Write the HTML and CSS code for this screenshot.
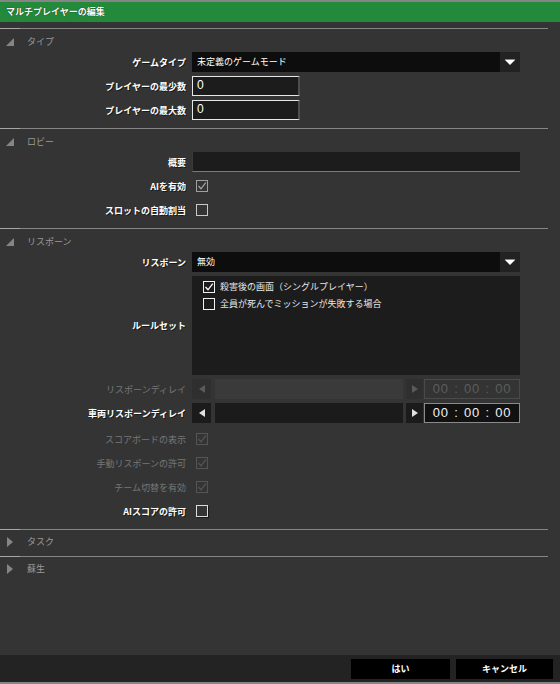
FILE: index.html
```html
<!DOCTYPE html>
<html lang="ja">
<head>
<meta charset="utf-8">
<title>マルチプレイヤーの編集</title>
<link rel="stylesheet" href="styles.css">
</head>
<body>
<div class="topline"></div>
<div class="titlebar">マルチプレイヤーの編集</div>
<div class="content">
  <section class="sec">
    <div class="sep"></div>
    <div class="sec-head"><svg class="tri" width="8" height="8" viewBox="0 0 8 8"><polygon points="8,0 8,8 0,8"/></svg><span>タイプ</span></div>
    <div class="rows">
      <div class="row"><span class="lbl">ゲームタイプ</span>
        <div class="select"><span class="sel-val">未定義のゲームモード</span><span class="sel-btn"><svg width="10" height="7" viewBox="0 0 10 7"><rect x="0" y="0" width="10" height="1" fill="#888"/><polygon points="0,1 10,1 5,6" fill="#fff"/></svg></span></div></div>
      <div class="row"><span class="lbl">プレイヤーの最少数</span><div class="num">0</div></div>
      <div class="row"><span class="lbl">プレイヤーの最大数</span><div class="num">0</div></div>
    </div>
  </section>
  <section class="sec">
    <div class="sep"></div>
    <div class="sec-head"><svg class="tri" width="8" height="8" viewBox="0 0 8 8"><polygon points="8,0 8,8 0,8"/></svg><span>ロビー</span></div>
    <div class="rows">
      <div class="row"><span class="lbl">概要</span><div class="text-in"></div></div>
      <div class="row"><span class="lbl">AIを有効</span><span class="cb cb-gray"><svg viewBox="0 0 12 12"><polyline points="2.5,6 5,8.8 9.8,2.6"/></svg></span></div>
      <div class="row"><span class="lbl">スロットの自動割当</span><span class="cb"></span></div>
    </div>
  </section>
  <section class="sec">
    <div class="sep"></div>
    <div class="sec-head"><svg class="tri" width="8" height="8" viewBox="0 0 8 8"><polygon points="8,0 8,8 0,8"/></svg><span>リスポーン</span></div>
    <div class="rows">
      <div class="row"><span class="lbl">リスポーン</span>
        <div class="select"><span class="sel-val">無効</span><span class="sel-btn"><svg width="10" height="7" viewBox="0 0 10 7"><rect x="0" y="0" width="10" height="1" fill="#888"/><polygon points="0,1 10,1 5,6" fill="#fff"/></svg></span></div></div>
      <div class="row row-list"><span class="lbl">ルールセット</span>
        <div class="listbox">
          <div class="li"><span class="cb cb-white"><svg viewBox="0 0 12 12"><polyline points="2.5,6 5,8.8 9.8,2.6"/></svg></span>殺害後の画面（シングルプレイヤー）</div>
          <div class="li"><span class="cb cb-white"></span>全員が死んでミッションが失敗する場合</div>
        </div>
      </div>
      <div class="row disabled"><span class="lbl">リスポーンディレイ</span>
        <div class="delay">
          <span class="arr"><svg width="6" height="8" viewBox="0 0 6 8"><polygon points="6,0 6,8 0,4"/></svg></span>
          <span class="track"></span>
          <span class="arr arr-r"><svg width="6" height="8" viewBox="0 0 6 8"><polygon points="0,0 0,8 6,4"/></svg></span>
          <span class="time">00 : 00 : 00</span>
        </div>
      </div>
      <div class="row"><span class="lbl">車両リスポーンディレイ</span>
        <div class="delay">
          <span class="arr"><svg width="6" height="8" viewBox="0 0 6 8"><polygon points="6,0 6,8 0,4"/></svg></span>
          <span class="track"></span>
          <span class="arr arr-r"><svg width="6" height="8" viewBox="0 0 6 8"><polygon points="0,0 0,8 6,4"/></svg></span>
          <span class="time">00 : 00 : 00</span>
        </div>
      </div>
      <div class="row disabled first-cb"><span class="lbl">スコアボードの表示</span><span class="cb cb-dis"><svg viewBox="0 0 12 12"><polyline points="2.5,6 5,8.8 9.8,2.6"/></svg></span></div>
      <div class="row disabled"><span class="lbl">手動リスポーンの許可</span><span class="cb cb-dis"><svg viewBox="0 0 12 12"><polyline points="2.5,6 5,8.8 9.8,2.6"/></svg></span></div>
      <div class="row disabled"><span class="lbl">チーム切替を有効</span><span class="cb cb-dis"><svg viewBox="0 0 12 12"><polyline points="2.5,6 5,8.8 9.8,2.6"/></svg></span></div>
      <div class="row"><span class="lbl">AIスコアの許可</span><span class="cb cb-bright"></span></div>
    </div>
  </section>
  <section class="sec collapsed">
    <div class="sep"></div>
    <div class="sec-head"><svg class="tri" width="6" height="10" viewBox="0 0 6 10"><polygon points="0,0 6,5 0,10"/></svg><span>タスク</span></div>
  </section>
  <section class="sec collapsed">
    <div class="sep"></div>
    <div class="sec-head"><svg class="tri" width="6" height="10" viewBox="0 0 6 10"><polygon points="0,0 6,5 0,10"/></svg><span>蘇生</span></div>
  </section>
</div>
<div class="footer">
  <button class="btn btn-yes">はい</button>
  <button class="btn btn-cancel">キャンセル</button>
</div>
<div class="bottomline"></div>
</body>
</html>
```

FILE: styles.css
```css
* { box-sizing: border-box; }
html, body { margin: 0; padding: 0; }
body {
  width: 560px;
  height: 684px;
  background: #343434;
  font-family: "Noto Sans CJK JP", "Noto Sans", sans-serif;
  font-size: 9px;
  color: #fff;
  display: flex;
  flex-direction: column;
  overflow: hidden;
}
.topline { height: 2px; background: #858585; flex: none; }
.titlebar {
  height: 20px;
  flex: none;
  background: #248a3b;
  color: #fff;
  font-weight: bold;
  line-height: 20px;
  padding-left: 6px;
  text-shadow: 0 0 1px #000;
}
.content {
  flex: 1;
  padding-top: 6px;
  display: flex;
  flex-direction: column;
}
.sep {
  width: 548px;
  height: 1px;
  background: linear-gradient(to right, #a8a8a8 20px, #858585 20px);
}
.sec-head {
  height: 23px;
  display: flex;
  align-items: center;
  padding-top: 2px;
  color: #9a9a9a;
}
.sec-head .tri { fill: #858585; margin-left: 6px; width: 8px; flex: none; }
.sec-head span { margin-left: 13px; }
.collapsed .sec-head { height: 26px; padding-top: 0; padding-bottom: 3px; }
.collapsed .sec-head .tri { margin-left: 7px; margin-right: 1px; width: 6px; height: 10px; }
.rows {
  display: flex;
  flex-direction: column;
  gap: 4px;
  padding-bottom: 8px;
}
.row {
  display: grid;
  grid-template-columns: 186px 328px;
  column-gap: 6px;
  align-items: center;
  height: 20px;
}
.lbl {
  text-align: right;
  font-weight: bold;
  color: #fff;
  white-space: nowrap;
  text-shadow: 1px 1px 0 #1a1a1a;
}
.disabled .lbl { color: #777; font-weight: normal; text-shadow: none; }
.select {
  display: flex;
  height: 20px;
  background: #0d0d0d;
}
.sel-val { flex: 1; line-height: 20px; padding-left: 5px; color: #fff; }
.sel-btn {
  width: 20px;
  background: #222;
  display: flex;
  align-items: center;
  justify-content: center;
}
.num {
  width: 108px;
  height: 20px;
  background: #1c1c1c;
  border: 1px solid #e6e6e6;
  border-right: 2px solid #4e4e4e;
  font-family: "Liberation Sans", Arial, sans-serif;
  font-size: 12px;
  line-height: 17px;
  padding-left: 4px;
  color: #fff;
}
.text-in {
  height: 20px;
  background: #1c1c1c;
  border-bottom: 1px solid #7a7a7a;
  border-left: 1px solid #3a3a3a;
}
.cb {
  width: 12px;
  height: 12px;
  margin-left: 4px;
  border: 1px solid #c8c8c8;
  display: flex;
  align-items: center;
  justify-content: center;
}
.cb svg { width: 12px; height: 12px; flex: none; fill: none; stroke-width: 1.3; }
.cb-gray { border-color: #a0a0a0; }
.cb-gray svg { stroke: #a0a0a0; }
.cb-dis { border-color: #555; }
.cb-dis svg { stroke: #555; }
.cb-bright { border-color: #dcdcdc; box-shadow: 1px 1px 0 #1a1a1a; }
.cb-white { border-color: #f0f0f0; margin-left: 0; margin-right: 5px; flex: none; }
.cb-white svg { stroke: #fff; }
.row-list { height: 99px; }
.listbox {
  height: 99px;
  background: #1c1c1c;
  padding: 2px 0 0 11px;
  align-self: stretch;
}
.li {
  display: flex;
  align-items: center;
  height: 17px;
  color: #e8e8e8;
  white-space: nowrap;
}
.delay {
  display: flex;
  height: 20px;
  align-items: stretch;
}
.arr {
  width: 19px;
  background: #1b1b1b;
  display: flex;
  align-items: center;
  justify-content: center;
  fill: #e0e0e0;
  flex: none;
}
.arr-r { width: 17px; margin-left: 3px; margin-right: 1px; }
.track { flex: 1; margin-left: 4px; background: #1b1b1b; }
.time {
  width: 96px;
  flex: none;
  background: #111;
  border: 1px solid #8a8a8a;
  color: #f2f2f2;
  font-family: "Liberation Sans", Arial, sans-serif;
  font-size: 13px;
  line-height: 18px;
  text-align: center;
  letter-spacing: 0.8px;
  word-spacing: 1px;
}
.disabled .arr { background: #2f2f2f; fill: #5a5a5a; }
.disabled .track { background: #3a3a3a; }
.disabled .time { background: #343434; border-color: #4a4a4a; color: #5c5c5c; }
.first-cb { margin-top: 2px; }
.footer {
  height: 27px;
  flex: none;
  background: #232323;
  display: flex;
  justify-content: flex-end;
  align-items: center;
  gap: 6px;
  padding-right: 7px;
}
.btn {
  height: 20px;
  border: none;
  background: #000;
  color: #fff;
  font-family: "Noto Sans CJK JP", "Noto Sans", sans-serif;
  font-size: 9px;
  font-weight: bold;
  padding: 0;
}
.btn-yes { width: 99px; }
.btn-cancel { width: 97px; }
.bottomline { height: 2px; background: #858585; flex: none; }
```
